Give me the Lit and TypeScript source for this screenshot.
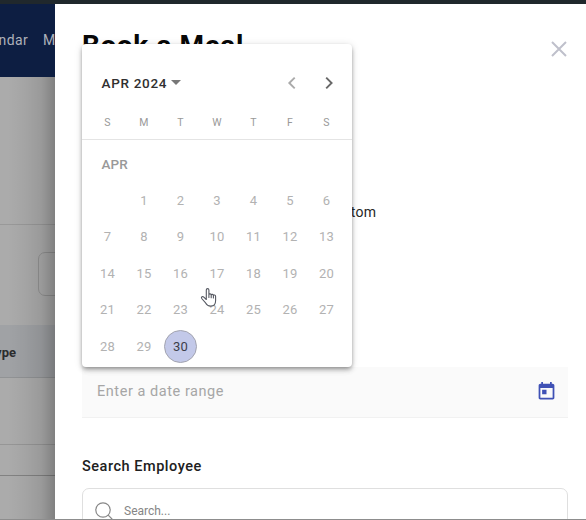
import { LitElement, html, css } from "lit";
import { customElement, property } from "lit/decorators.js";

@customElement("page-behind")
class PageBehind extends LitElement {
  static styles = css`
    :host { position: relative; display: flex; flex-direction: column; overflow: hidden; background: #ababab; }
    .nav { height: 73px; flex: none; background: #0d1e42; color: #adb1ba; display: flex; justify-content: flex-end; gap: 15px; font-size: 14px; line-height: 72px; white-space: nowrap; letter-spacing: 0.35px; }
    .nav span { flex: none; }
    .nav .clip { width: 12px; overflow: hidden; }
    .bar { height: 147px; flex: none; border-bottom: 1px solid #999; }
    .tools { height: 100px; flex: none; padding-top: 27px; box-sizing: border-box; }
    .box { margin-left: 38px; width: 60px; height: 44px; box-sizing: border-box; border: 1px solid #929292; border-radius: 7px; }
    .head { height: 53px; flex: none; box-sizing: border-box; background: #a0a2a5; border-bottom: 1px solid #919395; color: #2b2c2d; font-weight: 700; font-size: 13px; line-height: 56px; display: flex; justify-content: flex-end; padding-right: 39px; white-space: nowrap; }
    .row { height: 66px; flex: none; border-bottom: 1px solid #969696; }
    .row.last { height: 30px; border-color: #828282; }
    .shade { position: absolute; inset: 73px 0 0; background: linear-gradient(90deg, transparent 15%, rgba(0,0,0,.04) 45%, rgba(0,0,0,.1) 75%, rgba(0,0,0,.25)); }
  `;
  render() {
    return html`
      <div class="nav"><span>Calendar</span><span class="clip">Menu</span></div>
      <div class="bar"></div>
      <div class="tools"><div class="box"></div></div>
      <div class="head">Type</div>
      <div class="row"></div>
      <div class="row last"></div>
      <div class="shade"></div>
    `;
  }
}

@customElement("month-calendar")
class MonthCalendar extends LitElement {
  @property({ type: Number }) selected = 30;
  static styles = css`
    :host { display: block; box-sizing: border-box; background: #fff; border-radius: 4px; box-shadow: 0 2px 4px -1px rgba(0,0,0,.36), 0 4px 5px rgba(0,0,0,.12), 0 1px 8px rgba(0,0,0,.12); }
    .top { display: flex; align-items: center; height: 77px; padding: 0 13px 0 19.5px; }
    .period { font-size: 13.5px; font-weight: 500; letter-spacing: 0.7px; color: #303030; }
    .caret { margin-left: 4px; border: 5px solid transparent; border-top-color: #777; border-bottom: 0; }
    .arrows { margin-left: auto; display: flex; gap: 17px; }
    .arrows svg { width: 20px; height: 20px; fill: none; stroke: #aaa; stroke-width: 1.9; }
    .arrows .next { stroke: #686868; }
    .grid { display: grid; grid-template-columns: repeat(7, 36.5px); padding-left: 7.2px; text-align: center; }
    .names { height: 18px; border-bottom: 1px solid #e4e4e4; line-height: 4px; font-size: 10.5px; color: #999; }
    .month { height: 42px; line-height: 49px; padding-left: 19.5px; font-size: 13.5px; font-weight: 500; color: #999; letter-spacing: 0.1px; }
    .days { grid-auto-rows: 36.5px; font-size: 13px; color: #b2b2b2; align-items: center; justify-items: center; }
    .day { letter-spacing: 0.1px; }
    .day:first-child { grid-column: 2; }
    .picked { width: 33px; height: 33px; box-sizing: border-box; border: 1px solid #a3a4b0; border-radius: 50%; background: #c3c9e9; color: #3c3e4a; line-height: 31px; }
  `;
  render() {
    const days = Array.from({ length: 30 }, (_, i) => i + 1);
    return html`
      <div class="top">
        <span class="period">APR 2024</span><span class="caret"></span>
        <div class="arrows">
          <svg viewBox="0 0 20 20"><path d="M12.7 4.6 7.3 10l5.4 5.4" /></svg>
          <svg class="next" viewBox="0 0 20 20"><path d="M7.2 4.6 12.6 10l-5.4 5.4" /></svg>
        </div>
      </div>
      <div class="grid names">${["S", "M", "T", "W", "T", "F", "S"].map((d) => html`<span>${d}</span>`)}</div>
      <div class="month">APR</div>
      <div class="grid days">
        ${days.map((d) => html`<span class="day ${d === this.selected ? "picked" : ""}">${d}</span>`)}
      </div>
    `;
  }
}

@customElement("app-root")
class AppRoot extends LitElement {
  static styles = css`
    :host { position: relative; display: grid; grid-template: 4px 515px 1px / 55px 1fr; height: 520px; overflow: hidden; font-family: Roboto, sans-serif; background: #fff; }
    .chrome { grid-column: 1 / -1; background: #20282c; }
    .edge { grid-column: 1 / -1; background: #8d8d8d; }
    .drawer { display: flex; flex-direction: column; padding: 0 18px 0 27px; overflow: hidden; background: #fff; }
    .title { display: flex; justify-content: space-between; height: 76px; flex: none; }
    h1 { margin: 0; font-size: 28px; font-weight: 700; line-height: 84px; color: #080808; letter-spacing: 0.6px; }
    .close { width: 18px; height: 18px; margin-top: 36px; stroke: #bfc0cb; stroke-width: 2; fill: none; }
    .choice { height: 287px; flex: none; padding: 120px 0 0 244px; box-sizing: border-box; font-size: 14px; line-height: 24px; color: #262626; }
    .choice span { letter-spacing: 0.25px; }
    .range { display: flex; align-items: center; justify-content: space-between; height: 51px; flex: none; box-sizing: border-box; padding: 0 11px 2px 15px; background: #fafafa; border-bottom: 1px solid #f1f1f1; color: #a6a6a6; font-size: 14.5px; letter-spacing: 0.55px; }
    .range svg { width: 21px; height: 21px; fill: #3f51b5; }
    .label { flex: none; margin-top: 39px; height: 31px; font-size: 14.5px; font-weight: 500; line-height: 20px; letter-spacing: 0.53px; color: #202020; }
    .search { flex: none; height: 46px; box-sizing: border-box; border: 1px solid #dfdfdf; border-radius: 7px; display: flex; align-items: center; padding-left: 12px; gap: 11px; color: #858585; font-size: 12px; }
    .search svg { width: 18px; height: 18px; stroke: #888; stroke-width: 1.2; fill: none; }
    month-calendar { position: absolute; left: 82px; top: 44px; width: 270px; height: 323px; }
    .cursor { position: absolute; left: 200px; top: 287px; width: 18px; height: 21px; fill: #fff; stroke: #555861; stroke-width: 1.1; stroke-linejoin: round; stroke-linecap: round; }
  `;
  render() {
    return html`
      <div class="chrome"></div>
      <page-behind></page-behind>
      <main class="drawer">
        <div class="title">
          <h1>Book a Meal</h1>
          <svg class="close" viewBox="0 0 18 18"><path d="M2 2l14 14M16 2 2 16" /></svg>
        </div>
        <div class="choice"><span>Custom</span></div>
        <div class="range">
          <span>Enter a date range</span>
          <svg viewBox="0 0 24 24"><path d="M19 3h-1V1h-2v2H8V1H6v2H5c-1.110 0-2 .9-2 2v14c0 1.100.89 2 2 2h14c1.100 0 2-.9 2-2V5c0-1.100-.9-2-2-2zm0 16H5V8h14v11zM7 10h5v5H7z" /></svg>
        </div>
        <div class="label">Search Employee</div>
        <div class="search">
          <svg viewBox="0 0 18 18"><circle cx="8" cy="8" r="7.2" /><path d="m13.200 13.200 4 4" /></svg>
          <span>Search...</span>
        </div>
      </main>
      <div class="edge"></div>
      <month-calendar></month-calendar>
      <svg class="cursor" viewBox="0 0 18 21">
        <path d="M6.300 12.500V3c0-1.900 2.600-1.900 2.600 0V7.700c.3-1.200 2.300-1.100 2.300.3.400-1 2.200-.8 2.200.5.500-.9 2.200-.5 2.200.9v4.300c0 3.200-2 5.400-5 5.400-2.500 0-3.900-1.200-5-3.200L1.700 11.500c-.9-1.500.9-2.500 2.100-1.400zM8.900 7.700v2.800M11.200 8v2.700M13.400 8.600V11" />
      </svg>
    `;
  }
}
